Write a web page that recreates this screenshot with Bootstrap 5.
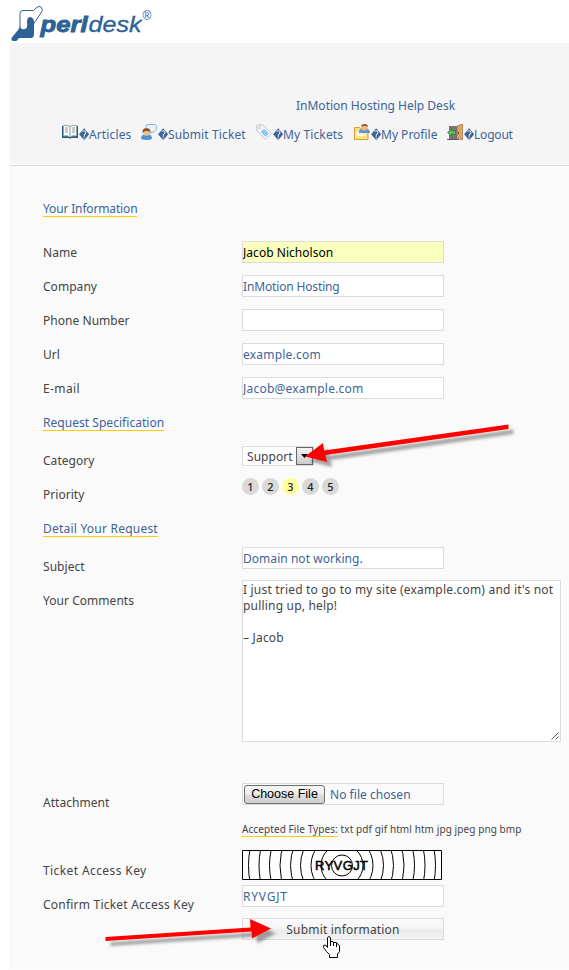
<!DOCTYPE html>
<html lang="en">
<head>
<meta charset="utf-8">
<title>PerlDesk - Submit Ticket</title>
<link rel="stylesheet" href="https://cdn.jsdelivr.net/npm/bootstrap@5.3.0/dist/css/bootstrap.min.css">
<style>
body{font:12px/16px "Noto Sans","Open Sans",sans-serif;letter-spacing:.04px;color:#444;background:#fff;width:569px;height:970px;overflow:hidden}
a,.blue{color:#3c6498;text-decoration:none}
.ls-tight{letter-spacing:-.15px!important}
.ls-mid{letter-spacing:.22px!important}
.ls-wide{letter-spacing:.4px!important}
.ls-code{letter-spacing:.8px!important}
.logo{height:43px;padding-left:10px}
.panel{margin-left:10px;height:926px;background:#fafafa;border-left:3px solid #f7f7f7}
.top-band{height:123px;margin-left:-3px;background:#f5f5f5;border-bottom:1px solid #dcdcdc;box-shadow:inset 0 -1px #fff}
.desk-title{padding:55px 0 0 286px;height:80px;letter-spacing:0}
.menu{padding-left:52px;height:24px}
.menu a{display:flex;align-items:center;white-space:nowrap;letter-spacing:.12px}
.menu a:nth-child(1){width:79px}
.menu a:nth-child(2){width:115px}
.menu a:nth-child(3){width:98px}
.menu a:nth-child(4){width:93px;letter-spacing:0}
.menu a:nth-child(5){letter-spacing:-.2px}
.menu svg{margin:-7px 0 0 0}
.q{font:12px/16px "DejaVu Sans",sans-serif;letter-spacing:0;width:10px;margin-left:1px;display:inline-block;transform:scaleX(.84);transform-origin:left}
.form-area{padding-left:30px}
.line{height:34px;display:grid;grid-template-columns:199px 1fr;align-items:start}
.line>label{padding-top:10px}
.line>.ctl{padding-top:6px}
.line>.key{padding-top:5px}
.down4>label{padding-top:13px}
.down9>label{padding-top:18px}
.tall{height:202px}
.tall>.ctl{padding-top:5px}
.attach{height:43px}
.types-line{height:25px}
.sec{height:35px;padding-top:10px}
.sec-first{height:69px;padding-top:35px}
.sec-low{height:33px;padding-top:13px}
.sec span{display:inline-block;line-height:15px;border-bottom:1px solid #fc0}
.field{display:block;width:202px;height:22px;border:1px solid #dcdcdc;border-radius:0;background:#fff;padding:1px 0 0;color:#3c6498;font:inherit;letter-spacing:inherit;outline:0}
.field.hot{background:#faffbd;color:#000}
.area{display:block;width:319px;height:162px;border:1px solid #dcdcdc;padding:1px 0 0;font:inherit;letter-spacing:.19px;color:#444;resize:none;outline:0;overflow:hidden;white-space:pre}
.areawrap{position:relative;width:319px}
.areawrap svg{position:absolute;right:2px;bottom:2px}
.pick{width:72px;height:20px;border:1px solid #dcdcdc;background:#fff;padding-left:4px}
.pick .arr{width:17px;height:18px;border:1px solid #666;background:linear-gradient(#f4f4f4,#ccc)}
.dots{gap:3px}
.num{width:17px;height:17px;border-radius:50%;background:#d9d9d9;font:500 11px/17px "Noto Sans",sans-serif;letter-spacing:0;text-align:center;color:#222}
.num.sel{background:#ff9}
.file{background:transparent;display:flex;align-items:center;padding:1px 0 0 1px}
.choose{width:81px;height:19px;border:1px solid #707070;border-radius:3px;background:linear-gradient(#f6f6f6,#eee 48%,#ddd 52%,#d0d0d0);font:12.5px/17px "Liberation Sans",sans-serif;letter-spacing:0;color:#000;text-align:center;padding:0;margin-right:5px}
.types{font-size:10px;letter-spacing:.09px;line-height:13px;padding-top:3px}
.types span{display:inline-block;border-bottom:1px solid #fc0}
.send{width:202px;height:22px;border:1px solid #dcdcdc;background:linear-gradient(#fafafa,#f6f6f6 45%,#ebebeb 55%,#f3f3f3);font:inherit;letter-spacing:.18px;color:#444;padding:1px 0 0;text-align:center}
.overlay{position:absolute;left:0;top:0;pointer-events:none}
</style>
</head>
<body class="position-relative">
<header class="logo">
<svg width="150" height="43" viewBox="10 0 150 43" aria-label="perldesk">
<path d="M20 13.500Q20 10.500 23 10.500H33.500L36 8Q39 5 41.500 7.500 43.500 10 41 13L33.500 24V30Q34 34 30 34H24L20 31Z" fill="#fff" stroke="#336699" stroke-width="1"/>
<path d="M27 22Q27 17 30.500 17 34 18 34 22V34Q34 38 31 38H19L16.500 41H13.500Q11 41 11.500 38L18 30Q20 28 20 25V27Q21 30 25 29 28 28 27 22Z" fill="#2d6297"/>
<text x="40.500" y="32" font-family="Liberation Sans,sans-serif" font-style="italic" font-size="22.500" font-weight="bold" fill="#2d6297" stroke="#2d6297" stroke-width=".9" letter-spacing="0" textLength="47" lengthAdjust="spacingAndGlyphs">perl</text>
<text x="88.500" y="32" font-family="Liberation Sans,sans-serif" font-style="italic" font-size="22.500" fill="#2d6297" stroke="#2d6297" stroke-width=".3" letter-spacing="0" textLength="53" lengthAdjust="spacingAndGlyphs">desk</text>
<text x="142.500" y="20" font-family="Liberation Sans,sans-serif" font-size="12" fill="#2d6297" letter-spacing="0">®</text>
</svg>
</header>
<main class="panel">
<div class="top-band">
<div class="desk-title blue">InMotion Hosting Help Desk</div>
<nav class="menu d-flex align-items-center">
<a href="#"><svg width="16" height="16" viewBox="0 0 16 16"><path d="M0 2h16v12H9l-1 1-1-1H0Z" fill="#275a86"/><path d="M1.500 1.500Q5 .5 8 2.500 11 .5 14.500 1.500V12Q11 11 8 13 5 11 1.500 12Z" fill="#fafafa" stroke="#8aa"/><path d="M8 3v9M3 4h3M3 6h3M3 8h3M10 4h3M10 6h3M10 8h3" stroke="#999"/></svg><span class="q">�</span><span>Articles</span></a>
<a href="#"><svg width="16" height="16" viewBox="0 0 16 16"><path d="M7 .5h7Q16 1 15.500 4T13 8l-3 .5L8 10V7Q5 6 5 3T7 .5Z" fill="#eaf3fd" stroke="#8db3df"/><path d="M0 15Q0 11 3 10.500h5Q11 11 11 15Q6 17 0 15Z" fill="#4a91dc"/><circle cx="5.500" cy="8.500" r="3.300" fill="#f4bd85"/><path d="M1.500 9Q1 4 5.500 4.200 10 4 9.500 9L8 7H4Z" fill="#85501f"/></svg><span class="q">�</span><span>Submit Ticket</span></a>
<a href="#"><svg width="16" height="16" viewBox="0 0 16 16"><path d="M.5 1.500 1.500 .5 7 1l8.500 8.500-6 6L1 7Z" fill="#f8f8f8" stroke="#c4c4c4"/><circle cx="3.500" cy="3.500" r="1.200" fill="#fff" stroke="#bbb"/><path d="m8 4.500 5 5-3.500 3.500-5-5Z" fill="#8bcaf5"/></svg><span class="q">�</span><span>My Tickets</span></a>
<a href="#"><svg width="16" height="16" viewBox="0 0 16 16"><path d="M.5 3.500h5l1 1.500h7.500v10.500H.5Z" fill="#fbe38b" stroke="#dd9b2c"/><path d="M2 9h6M2 11h10" stroke="#fff8dc" stroke-width="2"/><path d="M5 8Q5 5 8 5h4q4 0 4 4H5Z" fill="#5798d9"/><circle cx="10.500" cy="3.500" r="3" fill="#f0b98a"/><path d="M7 3Q7 0 10.500 0T14 3L12 2H9Z" fill="#9b542e"/></svg><span class="q">�</span><span>My Profile</span></a>
<a href="#"><svg width="16" height="16" viewBox="0 0 16 16"><path d="M2 2h8v13H2Z" fill="#777"/><path d="M0 15.500h12" stroke="#555"/><path d="m10 2 5.500-2v16L10 14Z" fill="#dba769" stroke="#a56b34" stroke-width=".7"/><path d="m.5 8.500 4-4v2h4v4h-4v2Z" fill="#62b860" stroke="#25782c" stroke-width=".7"/><path d="M11.500 8v2" stroke="#704019"/></svg><span class="q">�</span><span>Logout</span></a>
</nav>
</div>
<form class="form-area">
<div class="sec blue sec-first"><span class="ls-tight">Your Information</span></div>
<div class="line"><label>Name</label><div class="ctl"><input class="field hot" value="Jacob Nicholson"></div></div>
<div class="line"><label>Company</label><div class="ctl"><input class="field ls-tight" value="InMotion Hosting"></div></div>
<div class="line"><label>Phone Number</label><div class="ctl"><input class="field"></div></div>
<div class="line"><label>Url</label><div class="ctl"><input class="field ls-mid" value="example.com"></div></div>
<div class="line"><label class="ls-wide">E-mail</label><div class="ctl"><input class="field ls-mid" value="Jacob@example.com"></div></div>
<div class="sec blue"><span>Request Specification</span></div>
<div class="line down4"><label>Category</label><div class="ctl"><div class="pick d-flex justify-content-between"><span class="pt-1 lh-1">Support</span><span class="arr d-flex align-items-center justify-content-center"><svg width="7" height="4"><path d="M0 0h7L3.500 4Z"/></svg></span></div></div></div>
<div class="line down4"><label>Priority</label><div class="ctl dots d-flex pt-1"><span class="num">1</span><span class="num">2</span><span class="num sel">3</span><span class="num">4</span><span class="num">5</span></div></div>
<div class="sec blue sec-low"><span class="ls-mid">Detail Your Request</span></div>
<div class="line down9"><label>Subject</label><div class="ctl"><input class="field" value="Domain not working."></div></div>
<div class="line down9 tall"><label>Your Comments</label><div class="ctl"><div class="areawrap"><textarea class="area">I just tried to go to my site (example.com) and it's not
pulling up, help!

– Jacob</textarea><svg width="8" height="8"><path d="M.5 7.500 7.500 .5M4.500 7.500l3-3" stroke="#555"/></svg></div></div></div>
<div class="line down9 attach"><label>Attachment</label><div class="ctl"><div class="field file"><button type="button" class="choose">Choose File</button>No file chosen</div></div></div>
<div class="line types-line"><span></span><div class="types"><span>Accepted File Types:</span> txt pdf gif html htm jpg jpeg png bmp</div></div>
<div class="line down9"><label class="ls-wide">Ticket Access Key</label><div class="ctl key"><svg class="d-block" width="200" height="30" viewBox="0 0 200 30"><path d="M.5 .5h199v29H.5Z" fill="#fff" stroke="#000"/><g fill="none" stroke="#000"><circle cx="100" cy="15.500" r="10.500"/><circle cx="100" cy="15.500" r="21"/><circle cx="100" cy="15.500" r="31"/><circle cx="100" cy="15.500" r="41.500"/><circle cx="100" cy="15.500" r="51.500"/><circle cx="100" cy="15.500" r="62"/><circle cx="100" cy="15.500" r="72.500"/><circle cx="100" cy="15.500" r="83"/><circle cx="100" cy="15.500" r="93.500"/></g><text x="73" y="20" font-family="Liberation Sans,sans-serif" font-size="13" stroke="#000" stroke-width=".5" letter-spacing="0" textLength="53">RYVGJT</text></svg></div></div>
<div class="line down9"><label class="ls-mid">Confirm Ticket Access Key</label><div class="ctl"><input class="field ls-code" value="RYVGJT"></div></div>
<div class="line"><span></span><div class="ctl key"><button type="button" class="send d-block">Submit information</button></div></div>
</form>
</main>
<svg class="overlay" width="569" height="970">
<defs><filter id="sh" x="-10%" y="-50%" width="125%" height="220%"><feDropShadow dx="5" dy="5" stdDeviation="1.500" flood-color="#000" flood-opacity=".35"/></filter></defs>
<g fill="#f00" filter="url(#sh)"><path d="M305 456.500 323 443l1.200 7.500L508.500 424.500v4.500L325.500 455l1.500 7Z"/><path d="m105.500 937 145-9.500-.500-8.500 21 9.500-19 10-.500-7-146 9.500Z"/></g>
<path d="M327.500 937.500Q329 935.500 330.500 937.500V941.500L333 941.500 334 942.500H336.500L337.500 944 339.500 945.500V951.500L337.500 954V957.500H329.500V954.500L326.500 951.500 323.500 947.500Q323 944.500 325.500 945L327.500 947.500Z" fill="#fff" stroke="#000"/><path d="M330.500 941v5M333.500 942v4M336.500 943v4" stroke="#000"/>
</svg>
<script src="https://cdn.jsdelivr.net/npm/bootstrap@5.3.0/dist/js/bootstrap.bundle.min.js"></script>
</body>
</html>
